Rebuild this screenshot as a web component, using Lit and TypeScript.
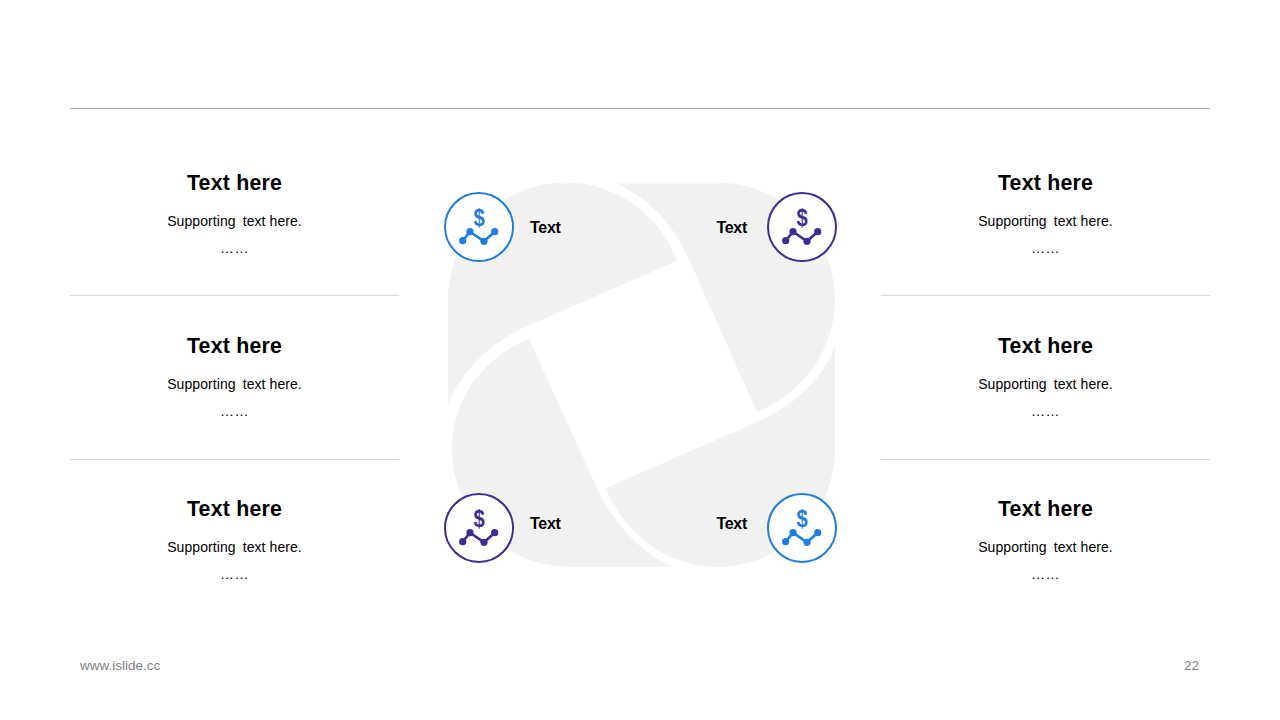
import { LitElement, html, css, svg } from "lit";
import { customElement } from "lit/decorators.js";

const BLUE = "#1e7de0";
const PURPLE = "#3b2d95";

const PETALS = [
  "M448 404 V300 C448 235 501 182.5 566 182.5 C615 182.5 660 214 677 261 L525 327 C490 343 463 370 448 404 Z",
  "M614 182.5 H717 C782 182.5 835 235 835 300 C835 350 802 394 757 412 L690 262 C675 226 650 198 614 182.5 Z",
  "M835 346 V449 C835 514 782 567 717 567 C667 567 622 532 606 488 L757 422 C795 405 822 380 835 346 Z",
  "M529 339 L598 490 C615 525 640 552 673 567 H570 C505 567 452 514 452 449 C452 400 483 357 529 339 Z",
];

const BADGES = [
  { x: 479, y: 227, c: BLUE, tx: 530, ty: 233, anchor: "start" },
  { x: 802, y: 227, c: PURPLE, tx: 747, ty: 233, anchor: "end" },
  { x: 479, y: 528, c: PURPLE, tx: 530, ty: 529, anchor: "start" },
  { x: 802, y: 528, c: BLUE, tx: 747, ty: 529, anchor: "end" },
];

const OX = 399;
const OY = 109;

@customElement("app-root")
export class AppRoot extends LitElement {
  static styles = css`
    :host {
      display: flex;
      flex-direction: column;
      width: 1280px;
      height: 720px;
      background: #fff;
      font-family: "Liberation Sans", Arial, sans-serif;
      color: #000;
      overflow: hidden;
    }
    .top {
      height: 108px;
      flex: none;
    }
    .rule {
      height: 1px;
      margin: 0 70px;
      background: #ababab;
      flex: none;
    }
    .main {
      display: grid;
      grid-template-columns: 329px 482px 329px;
      margin: 0 70px;
      flex: none;
      height: 515px;
    }
    .col {
      display: flex;
      flex-direction: column;
      padding-top: 23px;
    }
    .item {
      height: 164px;
      box-sizing: border-box;
      display: flex;
      flex-direction: column;
      align-items: center;
      padding-top: 38px;
      border-bottom: 1px solid #d9d9d9;
    }
    .item:nth-child(2) {
      padding-top: 37px;
    }
    .item:nth-child(3) {
      padding-top: 36px;
      border-bottom: none;
    }
    .title {
      font-size: 21.33px;
      font-weight: 700;
      line-height: 26px;
      letter-spacing: 0.2px;
    }
    .sub {
      font-size: 14px;
      line-height: 20px;
      margin-top: 15px;
      letter-spacing: 0.08px;
    }
    .first {
      margin-right: 3px;
    }
    .dots {
      font-size: 14px;
      line-height: 20px;
      margin-top: 7px;
      letter-spacing: 0.6px;
    }
    svg {
      display: block;
      overflow: visible;
    }
    .label {
      font-family: "Liberation Sans", Arial, sans-serif;
      font-size: 16px;
      font-weight: 700;
      letter-spacing: -0.3px;
      fill: #000;
    }
    .dollar {
      font-family: "Liberation Sans", Arial, sans-serif;
      font-size: 23.5px;
      font-weight: 700;
    }
    .footer {
      display: flex;
      justify-content: space-between;
      padding: 34px 81px 0 80px;
      font-size: 13.5px;
      line-height: 16px;
      color: #7f7f7f;
    }
  `;

  private col(cls: string) {
    return html`<div class="col ${cls}">
      ${[0, 1, 2].map(
        () => html`<div class="item">
          <div class="title">Text here</div>
          <div class="sub"><span class="first">Supporting</span> text here.</div>
          <div class="dots">……</div>
        </div>`
      )}
    </div>`;
  }

  private badge(b: (typeof BADGES)[number]) {
    const { x, y, c } = b;
    return svg`
      <circle cx=${x} cy=${y} r="34" fill="#fff" stroke=${c} stroke-width="2"></circle>
      <text class="dollar" transform="translate(${x} ${y - 1}) scale(0.86 1)" fill=${c} text-anchor="middle">$</text>
      <polyline points="${x - 16.3},${y + 13.7} ${x - 9},${y + 4.7} ${x + 5},${y + 14.3} ${x + 15.7},${y + 4.7}"
        fill="none" stroke=${c} stroke-width="2.6"></polyline>
      <circle cx=${x - 16.3} cy=${y + 13.7} r="3.6" fill=${c}></circle>
      <circle cx=${x - 9} cy=${y + 4.7} r="3.6" fill=${c}></circle>
      <circle cx=${x + 5} cy=${y + 14.3} r="3.6" fill=${c}></circle>
      <circle cx=${x + 15.7} cy=${y + 4.7} r="3.6" fill=${c}></circle>
      <text class="label" x=${b.tx} y=${b.ty} text-anchor=${b.anchor}>Text</text>
    `;
  }

  render() {
    return html`
      <div class="top"></div>
      <div class="rule"></div>
      <div class="main">
        ${this.col("left")}
        <svg width="482" height="515" viewBox="${OX} ${OY} 482 515">
          ${PETALS.map((d) => svg`<path d=${d} fill="#f1f1f1"></path>`)}
          ${BADGES.map((b) => this.badge(b))}
        </svg>
        ${this.col("right")}
      </div>
      <div class="footer">
        <span>www.islide.cc</span>
        <span>22</span>
      </div>
    `;
  }
}
